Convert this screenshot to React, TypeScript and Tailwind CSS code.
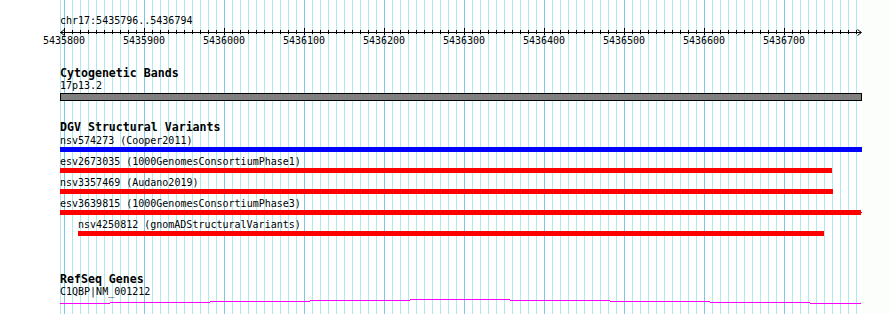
import React from 'react';

const MONO = "font-['DejaVu_Sans_Mono','Liberation_Mono',monospace]";

// ten labels on the ruler, one per 100 bp (80px)
const rulerLabels = [
  5435800, 5435900, 5436000, 5436100, 5436200, 5436300, 5436400, 5436500, 5436600, 5436700,
];

interface Variant {
  label: string;
  color: string;
  indent: number;
  width: number;
  tail?: boolean;
}

const variants: Variant[] = [
  { label: 'nsv574273 (Cooper2011)', color: 'bg-[#0000ff]', indent: 0, width: 802 },
  { label: 'esv2673035 (1000GenomesConsortiumPhase1)', color: 'bg-[#ff0000]', indent: 0, width: 772 },
  { label: 'nsv3357469 (Audano2019)', color: 'bg-[#ff0000]', indent: 0, width: 773 },
  { label: 'esv3639815 (1000GenomesConsortiumPhase3)', color: 'bg-[#ff0000]', indent: 0, width: 801, tail: true },
  { label: 'nsv4250812 (gnomADStructuralVariants)', color: 'bg-[#ff0000]', indent: 18, width: 746 },
];

// stepped intron line of the RefSeq gene: [x1, x2, y]
const geneSteps: [number, number, number][] = [
  [0, 50, 5], [50, 150, 4], [150, 250, 3], [250, 350, 2], [350, 450, 1],
  [450, 550, 2], [550, 650, 3], [650, 750, 4], [750, 801, 5],
];

const Grid: React.FC = () => {
  const lines = Array.from({ length: 100 }, (_, i) => 64 + i * 8);
  return (
    <svg className="absolute left-0 top-0" width={890} height={314}>
      <rect x={862} y={0} width={28} height={314} fill="#fbfefb" />
      <line x1={60.5} x2={60.5} y1={0} y2={314} stroke="#aee9ee" />
      {lines.map((x, i) => (
        <line
          key={x}
          x1={x + 0.5}
          x2={x + 0.5}
          y1={0}
          y2={314}
          stroke={i % 10 === 0 ? '#80c6ea' : '#aee9ee'}
        />
      ))}
    </svg>
  );
};

const Ruler: React.FC = () => {
  const ticks = Array.from({ length: 100 }, (_, i) => i * 8 + 4);
  return (
    <svg width={802} height={10} className="block">
      <line x1={0} x2={801} y1={6.5} y2={6.5} stroke="#000" />
      {ticks.map((x, i) => (
        <line
          key={x}
          x1={x + 0.5}
          x2={x + 0.5}
          y1={i % 10 === 0 ? 2 : 4}
          y2={i % 10 === 0 ? 9 : 8}
          stroke="#000"
        />
      ))}
      <polyline points="4.5,3.5 0.5,6.5 4.5,9.5" fill="none" stroke="#000" />
      <polyline points="797.5,3.5 801.5,6.5 797.5,9.5" fill="none" stroke="#000" />
    </svg>
  );
};

export default function App() {
  return (
    <div className={`relative w-[890px] h-[314px] overflow-hidden bg-white text-black ${MONO}`}>
      <Grid />

      <div className="relative flex flex-col pl-[60px] pt-[16px]">
        <div className="h-[10px] text-[10px] leading-[10px] whitespace-pre">chr17:5435796..5436794</div>

        <div className="h-[10px]">
          <Ruler />
        </div>
        <div className="flex -ml-[36px] h-[10px] text-[10px] leading-[10px]">
          {rulerLabels.map(n => (
            <div key={n} className="w-[80px] shrink-0 text-center">{n}</div>
          ))}
        </div>

        <div className="mt-[21px] h-[12px] text-[11.6px] leading-[12px] font-bold whitespace-pre">Cytogenetic Bands</div>
        <div className="mt-[2px] h-[10px] text-[10px] leading-[10px]">17p13.2</div>
        <div className="mt-[2px] h-[8px] w-[802px] border border-black bg-[#808080]" />

        <div className="mt-[20px] h-[12px] text-[11.6px] leading-[12px] font-bold whitespace-pre">DGV Structural Variants</div>
        <div className="mt-[3px] flex flex-col gap-[5px]">
          {variants.map(v => (
            <div key={v.label} className="flex flex-col" style={{ paddingLeft: v.indent }}>
              <div className="h-[10px] text-[10px] leading-[10px] whitespace-pre">{v.label}</div>
              <div className="mt-[1px] flex items-center">
                <div className={`h-[5px] ${v.color}`} style={{ width: v.width }} />
                {v.tail && <div className="h-[1px] w-[1px] bg-[#ff0000]" />}
              </div>
            </div>
          ))}
        </div>

        <div className="mt-[37px] h-[12px] text-[11.6px] leading-[12px] font-bold whitespace-pre">RefSeq Genes</div>
        <div className="mt-[2px] h-[10px] text-[10px] leading-[10px]">C1QBP|NM_001212</div>
        <svg width={802} height={7} className="block mt-[1px]">
          {geneSteps.map(([x1, x2, y]) => (
            <rect key={x1} x={x1} y={y} width={x2 - x1} height={1} fill="#ff00ff" />
          ))}
        </svg>
      </div>
    </div>
  );
}
